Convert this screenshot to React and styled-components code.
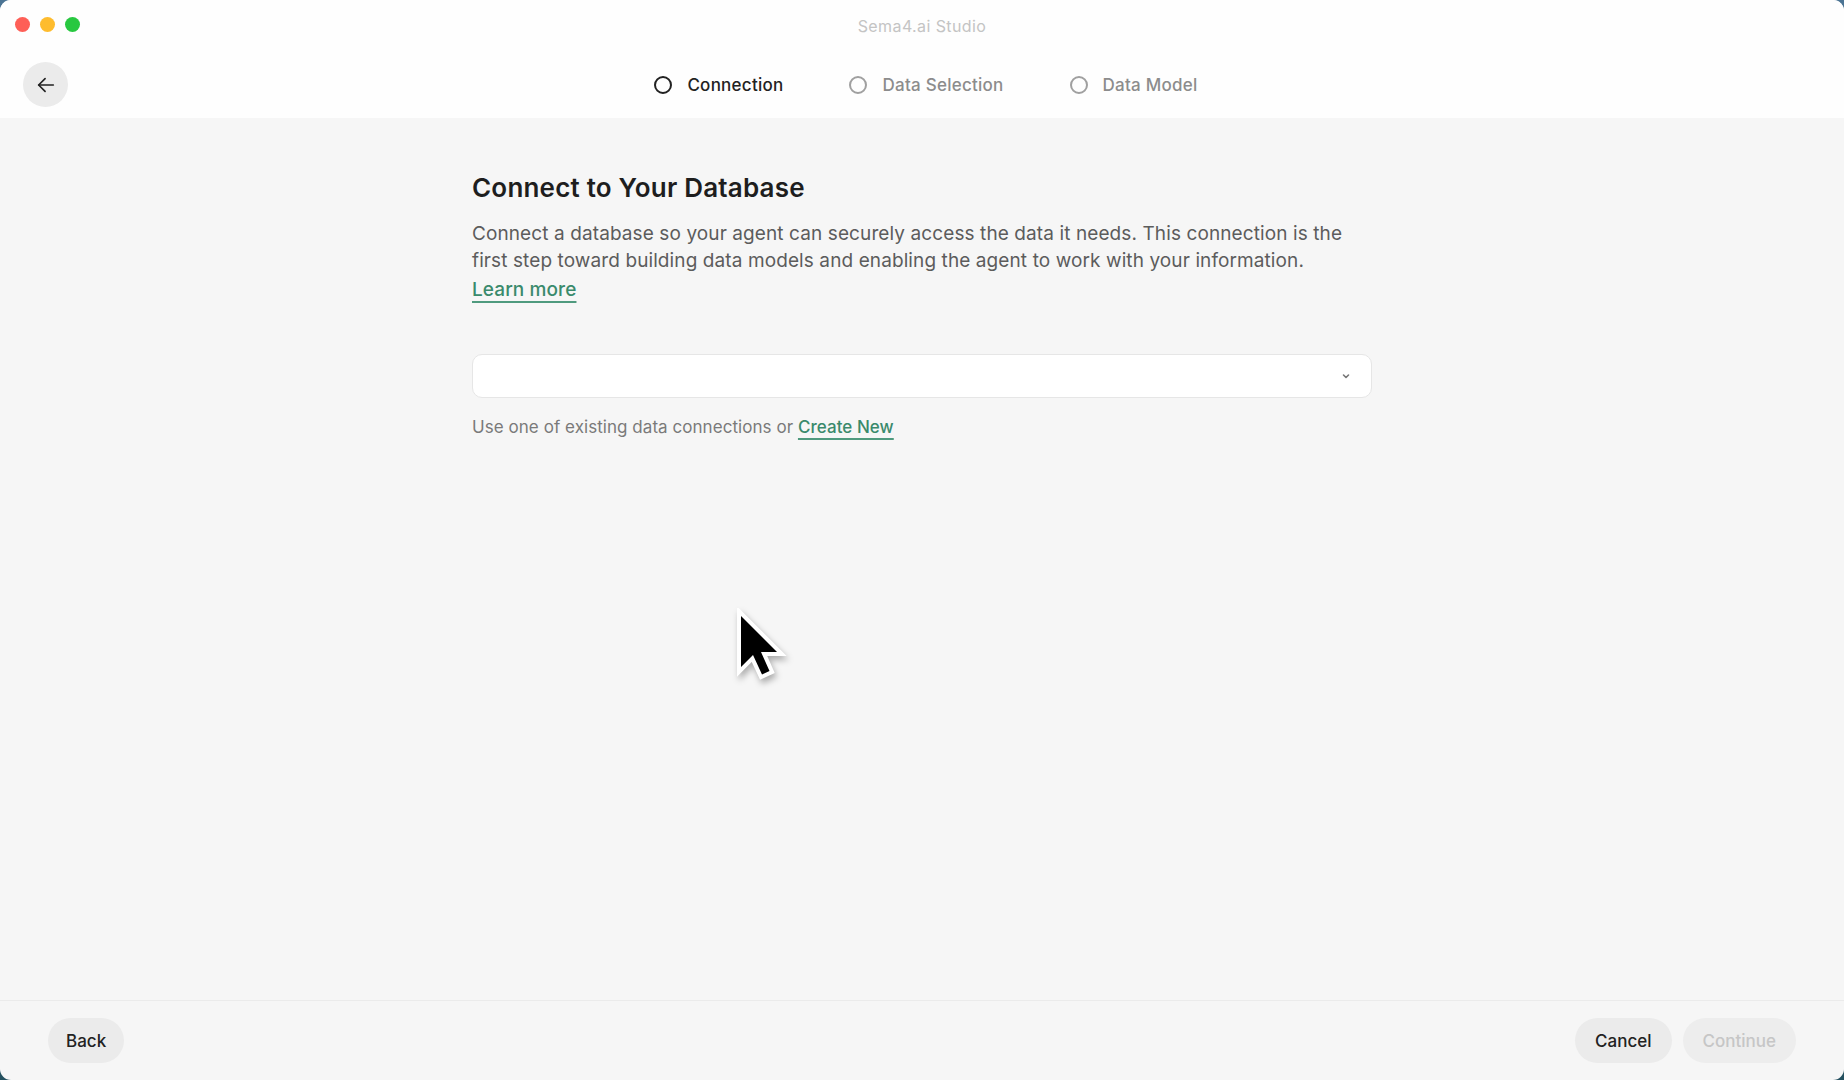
import React from 'react';
import styled, { createGlobalStyle } from 'styled-components';

const GlobalStyle = createGlobalStyle`
  html, body {
    margin: 0;
    padding: 0;
    height: 100%;
  }
  body {
    background: linear-gradient(180deg, #4b7494 0%, #24505f 100%);
    font-family: Inter, "Noto Sans", sans-serif;
    -webkit-font-smoothing: antialiased;
  }
  #root {
    height: 100%;
  }
`;

const Window = styled.div`
  position: relative;
  width: 1844px;
  height: 1080px;
  border-radius: 11px;
  overflow: hidden;
  display: flex;
  flex-direction: column;
  background: #f6f6f6;
`;

const Header = styled.header`
  height: 118px;
  background: #fefefe;
  display: flex;
  flex-direction: column;
`;

const TitleBar = styled.div`
  height: 50px;
  display: grid;
  grid-template-columns: 1fr auto 1fr;
  align-items: center;
  padding: 0 15px;
  box-sizing: border-box;
`;

const Lights = styled.div`
  display: flex;
  gap: 10px;
  margin-top: -2px;
`;

const Light = styled.span`
  width: 15px;
  height: 15px;
  border-radius: 50%;
  background: ${p => p.color};
`;

const Title = styled.div`
  font-size: 16px;
  color: #c4c4c4;
  letter-spacing: 0.4px;
  margin-top: 1px;
`;

const NavRow = styled.div`
  flex: 1;
  display: grid;
  grid-template-columns: 1fr auto 1fr;
  align-items: center;
  padding: 0 23px;
  margin-top: 1px;
`;

const IconButton = styled.button`
  width: 45px;
  height: 45px;
  border-radius: 50%;
  border: none;
  background: #ebebeb;
  display: flex;
  align-items: center;
  justify-content: center;
  padding: 0;
  color: #222;
`;

const Stepper = styled.ol`
  list-style: none;
  margin: 0;
  padding: 0;
  display: flex;
  gap: 66px;
  margin-left: 8px;
`;

const Step = styled.li`
  display: flex;
  align-items: center;
  gap: 15px;
  font-size: 17px;
  font-weight: 500;
  letter-spacing: 0.25px;
  color: ${p => (p.active ? '#222' : '#8c8c8c')};
`;

const StepCircle = styled.span`
  width: 14px;
  height: 14px;
  border-radius: 50%;
  border: 2px solid ${p => (p.active ? '#222' : '#a0a0a0')};
`;

const Main = styled.main`
  flex: 1;
  display: flex;
  justify-content: center;
  padding-top: 54px;
`;

const Content = styled.section`
  width: 900px;
`;

const Heading = styled.h1`
  margin: 0;
  font-size: 26px;
  line-height: 32px;
  font-weight: 600;
  color: #1e1e1e;
  letter-spacing: 0.2px;
`;

const Lead = styled.p`
  margin: 16px 0 0;
  font-size: 19px;
  line-height: 27px;
  color: #5c5c5c;
  letter-spacing: 0.1px;
  white-space: nowrap;
`;

const TextLink = styled.a`
  color: #3a8a6c;
  font-weight: 500;
  text-decoration: underline;
  text-decoration-thickness: 2px;
  text-underline-offset: 5px;
  text-decoration-color: #4f9a7e;
  cursor: pointer;
`;

const LeadLink = styled(TextLink)`
  display: inline-block;
  margin-top: 2px;
`;

const Select = styled.div`
  margin-top: 51px;
  height: 44px;
  box-sizing: border-box;
  background: #fff;
  border: 1px solid #e6e6e6;
  border-radius: 10px;
  display: flex;
  align-items: center;
  justify-content: flex-end;
  padding-right: 20px;
  color: #777;
`;

const Hint = styled.p`
  margin: 17px 0 0;
  font-size: 17px;
  line-height: 24px;
  color: #7a7a7a;
  letter-spacing: 0.05px;
`;

const Footer = styled.footer`
  border-top: 1px solid #ebebeb;
  padding: 17px 48px 17px;
  display: flex;
  justify-content: space-between;
  align-items: center;
`;

const Actions = styled.div`
  display: flex;
  gap: 11px;
`;

const PillButton = styled.button`
  height: 45px;
  border: none;
  border-radius: 23px;
  padding: 0 ${p => p.pad || 20}px;
  background: ${p => (p.disabled ? '#ededed' : '#ebebeb')};
  color: ${p => (p.disabled ? '#c6c6c6' : '#222')};
  font-family: inherit;
  font-size: 17px;
  font-weight: 500;
`;

const Cursor = styled.svg`
  position: absolute;
  left: 733px;
  top: 608px;
  filter: drop-shadow(2px 4px 3px rgba(0, 0, 0, 0.3));
`;

export default function App() {
  return (
    <>
      <GlobalStyle />
      <Window>
        <Header>
          <TitleBar>
            <Lights>
              <Light color="#fe5f57" />
              <Light color="#febc2e" />
              <Light color="#28c840" />
            </Lights>
            <Title>Sema4.ai Studio</Title>
            <div />
          </TitleBar>
          <NavRow>
            <IconButton aria-label="Back">
              <svg width="22" height="22" viewBox="0 0 24 24" fill="none" stroke="currentColor" strokeWidth="1.8" strokeLinecap="round" strokeLinejoin="round">
                <path d="M20 12H4" />
                <path d="M11 5l-7 7 7 7" />
              </svg>
            </IconButton>
            <Stepper>
              <Step active>
                <StepCircle active />
                Connection
              </Step>
              <Step>
                <StepCircle />
                Data Selection
              </Step>
              <Step>
                <StepCircle />
                Data Model
              </Step>
            </Stepper>
            <div />
          </NavRow>
        </Header>

        <Main>
          <Content>
            <Heading>Connect to Your Database</Heading>
            <Lead>
              Connect a database so your agent can securely access the data it needs. This connection is the
              <br />
              first step toward building data models and enabling the agent to work with your information.
              <br />
              <LeadLink>Learn more</LeadLink>
            </Lead>
            <Select>
              <svg width="10" height="10" viewBox="0 0 10 10" fill="none" stroke="currentColor" strokeWidth="1.6" strokeLinecap="round" strokeLinejoin="round">
                <path d="M2.5 4l2.5 2.5L7.5 4" />
              </svg>
            </Select>
            <Hint>
              Use one of existing data connections or <TextLink>Create New</TextLink>
            </Hint>
          </Content>
        </Main>

        <Footer>
          <PillButton pad={18}>Back</PillButton>
          <Actions>
            <PillButton>Cancel</PillButton>
            <PillButton disabled>Continue</PillButton>
          </Actions>
        </Footer>

        <Cursor width="60" height="82" viewBox="0 0 60 82">
          <polygon
            points="8,8 8,59 20,47 29,66.5 36.5,63 28,44 44,44"
            fill="#000"
            stroke="#fff"
            strokeWidth="8"
            strokeLinejoin="miter"
            paintOrder="stroke"
          />
        </Cursor>
      </Window>
    </>
  );
}
